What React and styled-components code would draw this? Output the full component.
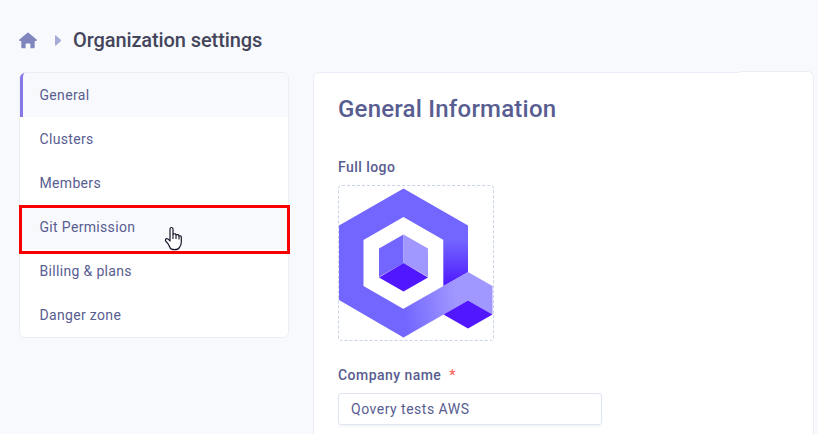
import React from "react";
import styled, { createGlobalStyle } from "styled-components";

const GlobalStyle = createGlobalStyle`
  * { box-sizing: border-box; }
  html, body { margin: 0; background: #f8f9fd; overflow: hidden; }
  body { font-family: Roboto, "Liberation Sans", sans-serif; color: #585d91; }
`;

const Page = styled.div`
  height: 434px;
  overflow: hidden;
  padding: 25px 4px 0 19px;
  display: flex;
  flex-direction: column;
`;

const Breadcrumb = styled.header`
  display: flex;
  align-items: center;
  height: 31px;
  flex: none;
`;

const HomeIcon = styled.svg`
  width: 18px;
  height: 17px;
  flex: none;
`;

const Caret = styled.svg`
  width: 7px;
  height: 11px;
  margin: 0 11px 1px 18px;
  flex: none;
`;

const PageTitle = styled.h1`
  margin: 0 0 1px;
  color: #44455b;
  font-size: 20px;
  font-weight: 500;
  line-height: 29px;
  letter-spacing: -0.1px;
  white-space: nowrap;
`;

const Columns = styled.div`
  display: flex;
  align-items: flex-start;
  gap: 24px;
  margin-top: 16px;
`;

const Sidebar = styled.nav`
  width: 270px;
  flex: none;
  background: #fff;
  border: 1px solid #ebeef6;
  border-radius: 6px;
`;

const NavItem = styled.a`
  display: flex;
  align-items: center;
  height: 44px;
  padding-left: 19.5px;
  font-size: 14px;
  letter-spacing: 0.33px;
  position: relative;
  background: ${(p) => (p.$tinted ? "#f8f9fd" : "transparent")};
  border-radius: ${(p) => (p.$active ? "5px 5px 0 0" : "0")};

  ${(p) =>
    p.$active &&
    `
    padding-left: 16.5px;
    border-left: 3px solid #8479e6;
  `}
`;

const Highlight = styled.span`
  position: absolute;
  top: 0;
  left: -1px;
  right: -2px;
  height: 49px;
  border: 3px solid #f90000;
  z-index: 1;
`;

const Pointer = styled.svg`
  position: absolute;
  left: 143px;
  top: 20px;
  width: 20px;
  height: 26px;
  z-index: 2;
`;

const Panel = styled.main`
  width: 501px;
  height: 400px;
  flex: none;
  position: relative;
  padding: 20px 24px;
  background: #fff;
  border: 1px solid #ebeef6;
  border-radius: 6px;

  &::after {
    content: "";
    position: absolute;
    top: -2px;
    right: -1px;
    width: 73px;
    height: 10px;
    background: #fff;
    border: solid #ebeef6;
    border-width: 1px 1px 0 0;
    border-top-right-radius: 6px;
  }
`;

const Heading = styled.h2`
  margin: 0;
  height: 32px;
  font-size: 24px;
  font-weight: 500;
  line-height: 32px;
  letter-spacing: 0.22px;
`;

const Label = styled.label`
  display: flex;
  gap: 8px;
  height: 20px;
  margin-top: ${(p) => p.$top}px;
  font-size: 14px;
  font-weight: 500;
  line-height: 20px;
  letter-spacing: 0.45px;
`;

const Required = styled.span`
  color: #ff6259;
`;

const LogoFrame = styled.div`
  width: 156px;
  height: 156px;
  margin-top: 8px;
  border: 1px dashed #c9d3e6;
  border-radius: 4px;
`;

const LogoArt = styled.svg`
  display: block;
  width: 154px;
  height: 154px;
`;

const TextField = styled.div`
  display: flex;
  align-items: center;
  width: 264px;
  height: 32px;
  margin-top: 8px;
  padding-left: 12px;
  border: 1px solid #dfe5f2;
  border-radius: 3px;
  box-shadow: 0 2px 2px rgba(60, 70, 120, 0.05);
  font-size: 14px;
  letter-spacing: 0.5px;
`;

const Logo = () => (
  <LogoArt viewBox="0 0 154 154" aria-label="Qovery">
    <defs>
      <linearGradient id="side" x1="0" y1="54" x2="0" y2="100" gradientUnits="userSpaceOnUse">
        <stop offset="0" stopColor="#7366ff" />
        <stop offset="0.9" stopColor="#5220ff" />
      </linearGradient>
      <linearGradient id="tail" x1="66" y1="130" x2="118" y2="122" gradientUnits="userSpaceOnUse">
        <stop offset="0" stopColor="#7366ff" />
        <stop offset="1" stopColor="#a098ff" />
      </linearGradient>
    </defs>
    <path
      fill="#7366ff"
      fillRule="evenodd"
      d="M64.5 2.5 129 39.5V86L104.5 100V54L64.5 31 24.5 54V100L64.5 123V151.5L0 114V39.5Z"
    />
    <path fill="url(#side)" d="M104.5 54H129V86L104.5 100Z" />
    <path fill="url(#tail)" d="M64 123 129 86 153.5 100V128.5L129 114.5 64.5 151.5 64 151.2Z" />
    <path fill="#5117ff" d="M129 114.5 153.5 128.5 129 142.5 104.5 128.5Z" />
    <path fill="#7366ff" d="M64.5 48.5V77L40 91V62.5Z" />
    <path fill="#a098ff" d="M64.5 48.5 89 62.5V91L64.5 77Z" />
    <path fill="#5117ff" d="M64.5 77 89 91.5 64.5 105.5 40 91.5Z" />
  </LogoArt>
);

const items = [
  { label: "General", active: true },
  { label: "Clusters" },
  { label: "Members" },
  { label: "Git Permission", hovered: true },
  { label: "Billing & plans" },
  { label: "Danger zone" },
];

export default function App() {
  return (
    <>
      <GlobalStyle />
      <Page>
        <Breadcrumb>
          <HomeIcon viewBox="0 0 18 17" fill="#8086bd">
            <path d="M8.2.9Q9 .2 9.8.9L17.6 7.6Q18.3 8.8 17 9H15.7V15Q15.7 16.3 14.4 16.3H11.4V12.2Q11.4 11.4 10.6 11.4H7.4Q6.6 11.4 6.6 12.2V16.3H3.6Q2.3 16.3 2.3 15V9H1Q-.3 8.8.4 7.6Z" />
          </HomeIcon>
          <Caret viewBox="0 0 7 11" fill="#a5abd5">
            <path d="M0 .7Q.6 0 1.3.7L5.7 4.7Q6.4 5.5 5.7 6.2L1.3 10.3Q.6 11 0 10.3Z" />
          </Caret>
          <PageTitle>Organization settings</PageTitle>
        </Breadcrumb>
        <Columns>
          <Sidebar>
            {items.map((item) => (
              <NavItem key={item.label} $active={item.active} $tinted={item.active || item.hovered}>
                {item.label}
                {item.hovered && (
                  <>
                    <Highlight />
                    <Pointer viewBox="0 0 20 26">
                      <path
                        d="M7 15V4.2Q7 2.5 8.5 2.5T10 4.2V9.2Q12.8 8 13.1 10Q15.6 8.7 16 11Q18.3 10.2 18.3 12.5V17Q18.3 20 16.6 22.2Q15.5 24.7 11.5 24.7T6.8 22Q5.6 18.5 2.8 16.2Q1.8 14.2 3.6 13.7Q5 13.5 7 16Z"
                        fill="#fff"
                        stroke="#15152b"
                        strokeWidth="1.2"
                        strokeLinejoin="round"
                      />
                      <path d="M10 9V14M13 10V14M16 11V14.5" fill="none" stroke="#15152b" strokeWidth="1.1" />
                    </Pointer>
                  </>
                )}
              </NavItem>
            ))}
          </Sidebar>
          <Panel>
            <Heading>General Information</Heading>
            <Label $top={32}>Full logo</Label>
            <LogoFrame>
              <Logo />
            </LogoFrame>
            <Label $top={24}>
              Company name <Required>*</Required>
            </Label>
            <TextField>Qovery tests AWS</TextField>
          </Panel>
        </Columns>
      </Page>
    </>
  );
}
